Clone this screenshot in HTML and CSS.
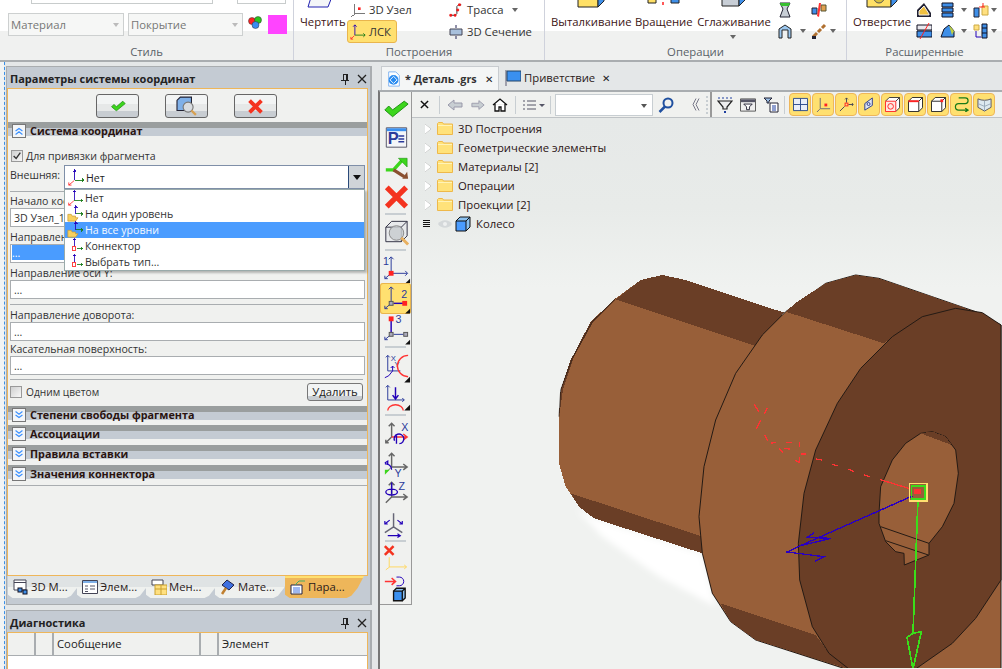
FILE: index.html
```html
<!DOCTYPE html>
<html lang="ru">
<head>
<meta charset="utf-8">
<title>Параметры системы координат</title>
<link rel="stylesheet" href="styles.css">
</head>
<body>
<svg class="defs" width="0" height="0">
  <symbol id="triad" viewBox="0 0 20 20"><g fill="none" stroke-width="1" shape-rendering="crispEdges"><path d="M8.500 1V13M6.500 3.500h4M7.500 2.500h2" stroke="#2200b8"/><path d="M8.500 13.500H19M17.500 11.500v4M18.500 12.500v2" stroke="#187a18"/></g><path d="M8 14L2 19M2 16v3h3" fill="none" stroke="#f33"/></symbol>
  <symbol id="triad-folder" viewBox="0 0 20 20"><g fill="none" stroke-width="1" shape-rendering="crispEdges"><path d="M10.500 0V10M8.500 2.500h4M9.500 1.500h2" stroke="#2200b8"/><path d="M10.500 10.500H19M17.500 8.500v4M18.500 9.500v2" stroke="#187a18"/></g><path d="M1 19V11h4l1 2h4v2h3l-3 4z" fill="#f8d060" stroke="#c89a30" stroke-width=".8"/></symbol>
  <symbol id="conn" viewBox="0 0 20 20"><g fill="none" stroke-width="1" shape-rendering="crispEdges"><path d="M8.500 1V11M6.500 3.500h4M7.500 2.500h2" stroke="#2200b8"/><path d="M12 13.500H19M17.500 11.500v4M18.500 12.500v2" stroke="#187a18"/><rect x="6.500" y="11.500" width="4" height="4" stroke="#f22"/></g></symbol>
  <symbol id="folder" viewBox="0 0 16 13"><path d="M.5 12.500V1.500l1-1h4l1 1.500h9v10.500z" fill="#ffe27a" stroke="#eeb84a"/><path d="M1 3.500h14" stroke="#fff3b8"/></symbol>
  <symbol id="cube-blue" viewBox="0 0 16 16"><path d="M1 5l4-4h10v10l-4 4M11 5l4-4" fill="#8ac0f0" stroke="#111"/><path d="M1 5h10v10H1z" fill="#4a9cff" stroke="#111"/></symbol>
  <symbol id="chev-up" viewBox="0 0 14 14"><path d="M3 7l4-3 4 3M3 11l4-3 4 3" fill="none" stroke="#3a90ff" stroke-width="1.400"/></symbol>
  <symbol id="chev-down" viewBox="0 0 14 14"><path d="M3 3l4 3 4-3M3 7l4 3 4-3" fill="none" stroke="#3a90ff" stroke-width="1.400"/></symbol>
  <symbol id="check" viewBox="0 0 20 14"><path d="M2 8l3-3 3 3 8-7 3 3-11 9z" fill="#3cd61c" stroke="#1f8f14"/></symbol>
  <symbol id="cross" viewBox="0 0 20 20"><path d="M3 3l14 14M17 3L3 17" stroke="#f4331f" stroke-width="4.500" fill="none"/></symbol>
</svg>

<header class="ribbon">
  <section class="rgroup rg-style">
    <div class="clipped-row"><span class="clip-a"></span><span class="clip-b"></span></div>
    <div class="style-row">
      <div class="rcombo">Материал<i class="mini-caret"></i></div>
      <div class="rcombo">Покрытие<i class="mini-caret"></i></div>
      <svg class="style-balls" viewBox="0 0 15 15"><circle cx="4" cy="6" r="3.500" fill="#f22" stroke="#333" stroke-width=".5"/><circle cx="10" cy="5" r="3.500" fill="#2cc41c" stroke="#333" stroke-width=".5"/><circle cx="7.500" cy="10" r="3.500" fill="#3a8cf0" stroke="#333" stroke-width=".5"/></svg>
      <span class="swatch"></span>
    </div>
    <div class="rlabel">Стиль</div>
  </section>

  <section class="rgroup rg-build">
    <div class="rbody">
      <div class="bigbtn draw">
        <svg class="draw-ic" viewBox="0 0 28 8"><path d="M5-6h21l-5 13H1z" fill="#f4f6f8" stroke="#2222b0"/></svg>
        <span>Чертить</span>
      </div>
      <div class="smallcol">
        <div class="sbtn"><svg class="ic14" viewBox="0 0 18 16"><path d="M5.500 1v11.500H17M5 13l-4 3" fill="none" stroke="#666" shape-rendering="crispEdges"/><rect x="9" y="5" width="3" height="3" fill="#f22"/></svg><span>3D Узел</span></div>
        <div class="sbtn active"><svg class="ic16" viewBox="0 0 18 18"><path d="M5.500 1v11.500M3.500 3l2-2 2 2" fill="none" stroke="#2200b8"/><path d="M5.500 12.500H17M15 10.500l2 2-2 2" fill="none" stroke="#187a18"/><path d="M5 13l-4 4M1 14.500V17h2.500" fill="none" stroke="#f33"/></svg><span>ЛСК</span></div>
      </div>
      <div class="smallcol second">
        <div class="sbtn"><svg class="ic14" viewBox="0 0 16 16"><path d="M1 14h6l2-2V4l2-2h3" fill="none" stroke="#222"/><path d="M1 13h2v2H1zM6 13h2v2H6zM11 1h2v2h-2zM9 7h2v2H9z" fill="#f22" stroke="#e11"/></svg><span>Трасса</span><i class="caret"></i></div>
        <div class="sbtn cut"><svg class="ic14" viewBox="0 0 14 14"><path d="M1 4h12v6H1z" fill="#a8c0dc" stroke="#445"/><path d="M7 0v3M7 11v3" stroke="#225"/></svg><span>3D Сечение</span></div>
      </div>
    </div>
    <div class="rlabel">Построения</div>
  </section>

  <section class="rgroup rg-ops">
    <div class="rbody">
      <div class="bigbtn op1">
        <svg class="clip-ic" viewBox="0 0 28 8"><path d="M1-8h20V7H1z" fill="#ffe066" stroke="#222"/><path d="M21 7l6-6v-9h-6z" fill="#3f8fe8" stroke="#222"/></svg>
        <span>Выталкивание</span>
      </div>
      <div class="bigbtn op2">
        <svg class="clip-ic" viewBox="0 0 34 8"><path d="M1-4h8V3H1z" fill="#ffe066" stroke="#222"/><path d="M16-8v15" stroke="#f22" stroke-dasharray="3 2" stroke-width="1.500"/><path d="M24-4h8V3h-8z" fill="#3f8fe8" stroke="#222"/></svg>
        <span>Вращение</span>
      </div>
      <div class="bigbtn op3">
        <svg class="clip-ic" viewBox="0 0 26 8"><path d="M1-8h17V6H1z" fill="#c8ced6" stroke="#222"/><path d="M18 6l6-6V-8h-6z" fill="#3f8fe8" stroke="#222"/></svg>
        <span>Сглаживание</span>
        <i class="caret big-caret"></i>
      </div>
      <div class="icongrid ops-grid">
        <svg class="ic16 a" viewBox="0 0 16 16"><path d="M3 1h10l-3 6 3 8H3l3-8z" fill="#c8ced6" stroke="#223"/><path d="M3 1h10l-1 3H4z" fill="#38c030"/></svg>
        <svg class="ic16 b" viewBox="0 0 16 16"><path d="M1 6h5v6H1z" fill="#3f8fe8" stroke="#223"/><path d="M10 3h5v6h-5z" fill="#e0a050" stroke="#553"/><path d="M6 14l2-13h2L8 15z" fill="#f33"/></svg>
        <svg class="ic16 c" viewBox="0 0 16 16"><path d="M2 15V6l6-4 6 4v9h-3V7H5v8z" fill="#9cc8f0" stroke="#222"/></svg>
        <i class="caret d"></i>
        <svg class="ic16 e" viewBox="0 0 16 16"><path d="M2 14l4-4M7 9l3-3M11 5l3-3" stroke="#b07030" stroke-width="3"/><path d="M1 13h4v3H1z" fill="#223"/></svg>
        <i class="caret f"></i>
      </div>
    </div>
    <div class="rlabel">Операции</div>
  </section>

  <section class="rgroup rg-adv">
    <div class="rbody">
      <div class="bigbtn adv1">
        <svg class="clip-ic" viewBox="0 0 32 8"><path d="M1-8h24V7H1z" fill="#ffe066" stroke="#222"/><path d="M25 7l6-6V-8h-6z" fill="#3f8fe8" stroke="#222"/><circle cx="13" cy="-2" r="5" fill="#d8c040" stroke="#555"/></svg>
        <span>Отверстие</span>
      </div>
      <div class="icongrid adv-grid">
        <svg class="ic16" viewBox="0 0 16 16"><path d="M1 15V8l7-7 7 10v4z" fill="#223"/><path d="M3 13V9l5-5 5 8v1z" fill="#f0c040" stroke="#eee"/></svg>
        <svg class="ic16" viewBox="0 0 16 16"><path d="M2 1h11v4H2zM2 6h11v4H2zM2 11h11v4H2z" fill="#3f8fe8" stroke="#112"/></svg>
        <i class="caret"></i>
        <svg class="ic16" viewBox="0 0 16 16"><path d="M1 6h5v9H1z" fill="#3f8fe8" stroke="#223"/><path d="M9 4h6v9H9z" fill="#ffe080" stroke="#ca4"/><path d="M6 5h6M10 1v4" stroke="#f22"/></svg>
        <i class="caret"></i>
        <svg class="ic16" viewBox="0 0 16 16"><path d="M1 2h15v5H1z" fill="#e8e8ee" stroke="#112"/><path d="M1 8h15v6H1z" fill="#3f8fe8" stroke="#112"/><path d="M4 16L13 0" stroke="#f22"/></svg>
        <svg class="ic16" viewBox="0 0 16 16"><path d="M1 14l3-8 5-4 5 6v6z" fill="#3f8fe8" stroke="#112"/><path d="M9 2l5 6-2 4z" fill="#c0d040"/></svg>
        <i class="caret"></i>
        <svg class="ic16" viewBox="0 0 16 16"><path d="M1 2h5v5H1z" fill="#ffe080" stroke="#ca4"/><path d="M9 1h5v14H9zM9 5h5M9 10h5" fill="#3f8fe8" stroke="#112"/><path d="M3 8v6h5" fill="none" stroke="#2200b8"/></svg>
        <i class="caret"></i>
      </div>
    </div>
    <div class="rlabel">Расширенные</div>
  </section>
</header>

<main class="main">
  <div class="rail"></div>

  <div class="leftcol">
    <section class="panel params">
      <div class="ptitle"><span>Параметры системы координат</span>
        <svg class="pin" viewBox="0 0 10 12"><path d="M3 1h4v6H3zM1 7.500h8M5 8v4M6 1.500v5" fill="none" stroke="#222" shape-rendering="crispEdges"/></svg>
        <svg class="close" viewBox="0 0 10 10"><path d="M1 1l8 8M9 1L1 9" stroke="#222" stroke-width="1.300"/></svg>
      </div>
      <div class="pbody">
        <div class="btnrow">
          <button class="tbtn"><svg class="b-ic" viewBox="0 0 20 14"><use href="#check"/></svg></button>
          <button class="tbtn"><svg class="b-ic2" viewBox="0 0 22 18"><path d="M2 4l3-3h10v10l-3 2H2z" fill="#7fb0e8" stroke="#223"/><circle cx="12" cy="10" r="4.500" fill="#d8dce0" stroke="#777"/><path d="M15 13l4 4" stroke="#d8a050" stroke-width="2"/></svg></button>
          <button class="tbtn"><svg class="b-ic3" viewBox="0 0 20 20"><use href="#cross"/></svg></button>
        </div>

        <div class="sec"><span class="tog"><svg viewBox="0 0 14 14"><use href="#chev-up"/></svg></span><b>Система координат</b></div>
        <label class="chkrow first"><span class="chk on"><svg viewBox="0 0 12 12"><path d="M2 6l3 3 5-7" fill="none" stroke="#333" stroke-width="1.600"/></svg></span>Для привязки фрагмента</label>
        <div class="extrow">
          <span class="extlabel">Внешняя:</span>
          <div class="combo"><svg class="ic18" viewBox="0 0 20 20"><use href="#triad"/></svg><span>Нет</span><span class="dropbtn"><i></i></span></div>
        </div>
        <hr class="hr r1">
        <div class="flabel">Начало координат:</div>
        <div class="inp">3D Узел_1</div>
        <div class="flabel">Направление оси X:</div>
        <div class="inp"><span class="sel">...</span></div>
        <div class="flabel">Направление оси Y:</div>
        <div class="inp dots">...</div>
        <hr class="hr r2">
        <div class="flabel">Направление доворота:</div>
        <div class="inp dots">...</div>
        <div class="flabel tight">Касательная поверхность:</div>
        <div class="inp dots">...</div>
        <hr class="hr r3">
        <div class="colorrow">
          <label class="chkrow mono"><span class="chk"></span>Одним цветом</label>
          <button class="delbtn">Удалить</button>
        </div>
        <div class="sec s2"><span class="tog"><svg viewBox="0 0 14 14"><use href="#chev-down"/></svg></span><b>Степени свободы фрагмента</b></div>
        <div class="sec"><span class="tog"><svg viewBox="0 0 14 14"><use href="#chev-down"/></svg></span><b>Ассоциации</b></div>
        <div class="sec"><span class="tog"><svg viewBox="0 0 14 14"><use href="#chev-down"/></svg></span><b>Правила вставки</b></div>
        <div class="sec"><span class="tog"><svg viewBox="0 0 14 14"><use href="#chev-down"/></svg></span><b>Значения коннектора</b></div>
        <hr class="hr r4">

        <ul class="dropdown">
          <li><svg viewBox="0 0 20 20"><use href="#triad"/></svg>Нет</li>
          <li><svg viewBox="0 0 20 20"><use href="#triad-folder"/></svg>На один уровень</li>
          <li class="hl"><svg viewBox="0 0 20 20"><use href="#triad-folder"/></svg>На все уровни</li>
          <li><svg viewBox="0 0 20 20"><use href="#conn"/></svg>Коннектор</li>
          <li><svg viewBox="0 0 20 20"><use href="#conn"/></svg>Выбрать тип...</li>
        </ul>
      </div>
      <div class="ptabs">
        <div class="ptab t1"><svg class="ic16" viewBox="0 0 16 16"><path d="M1 1h12v10H1zM1 3.500h12" fill="#fff" stroke="#445"/><rect x="5" y="9" width="4" height="4" fill="#3f8fe8" stroke="#112"/><rect x="10" y="11" width="4" height="4" fill="#3f8fe8" stroke="#112"/></svg><span>3D М...</span></div>
        <div class="ptab t2"><svg class="ic16" viewBox="0 0 16 16"><path d="M.5 1.500h15v13H.5z" fill="#fff" stroke="#445"/><path d="M1 2h14v2H1z" fill="#7fb0e8"/><path d="M3 7h3M8 7h5M3 10h3M8 10h5M3 12.500h3" stroke="#556"/></svg><span>Элем...</span></div>
        <div class="ptab t3"><svg class="ic16" viewBox="0 0 16 16"><path d="M1 1h11v5H1z" fill="#fff" stroke="#445"/><path d="M4 6h12v10H4z" fill="#ffe080" stroke="#c9a030"/><path d="M4 10h12M10 6v10" stroke="#c9a030"/></svg><span>Мен...</span></div>
        <div class="ptab t4"><svg class="ic16" viewBox="0 0 16 16"><path d="M2 6l5-5 7 5-5 5z" fill="#3f70e0" stroke="#224"/><path d="M6 9l-4 6" stroke="#c08030" stroke-width="2.500"/></svg><span>Мате...</span></div>
        <div class="ptab t5 on"><svg class="ic16" viewBox="0 0 16 16"><path d="M1 6h11v9H1z" fill="#fff" stroke="#224"/><path d="M3 9h7M3 11h7M3 13h7" stroke="#3f70e0"/><path d="M5 6l4-4h6" fill="none" stroke="#4a6"/></svg><span>Пара...</span></div>
      </div>
    </section>

    <section class="panel diag">
      <div class="ptitle"><span>Диагностика</span>
        <svg class="pin" viewBox="0 0 10 12"><path d="M3 1h4v6H3zM1 7.500h8M5 8v4M6 1.500v5" fill="none" stroke="#222" shape-rendering="crispEdges"/></svg>
        <svg class="close" viewBox="0 0 10 10"><path d="M1 1l8 8M9 1L1 9" stroke="#222" stroke-width="1.300"/></svg>
      </div>
      <div class="dbody">
        <div class="dhead"><span class="c1"></span><span class="c2"></span><span class="c3">Сообщение</span><span class="c2"></span><span class="c4">Элемент</span></div>
      </div>
    </section>
  </div>

  <div class="rightcol">
    <div class="doctabs">
      <div class="doctab on">
        <svg class="ic16" viewBox="0 0 16 18"><path d="M2 1h8l4 4v12H2z" fill="#fff" stroke="#7ab0f0"/><circle cx="7.500" cy="10" r="5.500" fill="#2a8cf0"/><path d="M7.500 6l4 4-4 4-4-4z" fill="none" stroke="#fff"/></svg>
        <b>* Деталь .grs</b><span class="x">✕</span>
      </div>
      <div class="doctab plain">
        <svg class="ic16" viewBox="0 0 16 16"><path d="M1 0v16" stroke="#889" stroke-width="1.500"/><path d="M2 1h14v10H2z" fill="#3a90f0" stroke="#246"/></svg>
        <span>Приветствие</span><span class="x">✕</span>
      </div>
    </div>
    <div class="work">
      <aside class="side">
        <svg class="v h30" viewBox="0 0 32 30"><path d="M5 18l4-4 4 4 12-9 4 3-16 13z" fill="#3cd61c" stroke="#1f8f14"/></svg>
        <svg class="v h30" viewBox="0 0 32 30"><path d="M6.500 5.500h21v20h-21z" fill="#f4f6f8" stroke="#556"/><path d="M7 6h20v3H7z" fill="#3a90f0"/><text x="8" y="22.500" class="pe">P</text><path d="M19 14h6M19 17h6M19 20h6" stroke="#2a3a9a" stroke-width="1.600"/></svg>
        <svg class="v h30" viewBox="0 0 32 30"><path d="M6 18h8l9-10" fill="none" stroke="#3cd61c" stroke-width="3.500"/><path d="M19 6h9v9z" fill="#3cd61c" stroke="#1f8f14" stroke-width=".6"/><path d="M14 18l11 7" stroke="#8a5030" stroke-width="3.500"/><path d="M23 27l6 0-1-7z" fill="#8a5030"/></svg>
        <svg class="v h30" viewBox="0 0 32 30"><path d="M7 5l20 20M27 5L7 25" stroke="#f4331f" stroke-width="5.500" fill="none"/></svg>
        <i class="vsep"></i>
        <svg class="v h32" viewBox="0 0 32 32"><path d="M6 11l6-6h16v15l-6 6H6z" fill="#e8eaec" stroke="#334"/><path d="M6 11h16v15M22 11l6-6" fill="none" stroke="#334"/><circle cx="17" cy="17" r="7.500" fill="#c8ccd0" fill-opacity=".85" stroke="#888"/><path d="M22 22l7 7" stroke="#e8b060" stroke-width="3"/></svg>
        <i class="vsep"></i>
        <div class="vbtn">
          <svg viewBox="0 0 32 31"><path d="M11.500 5v16M9 7l2.500-2.500L14 7M11.500 21.500H28M26 19l2.500 2.500L26 24M11 22l-6 5M5 24v3h3" fill="none" stroke="#2a3a9a"/><rect x="9" y="19" width="5" height="5" fill="#f22"/><text x="3" y="13" class="num">1</text><path d="M31 27v5h-5z" fill="#111"/></svg>
        </div>
        <div class="vbtn sel-y">
          <svg viewBox="0 0 32 31"><path d="M11.500 4v16M9 6l2.500-2.500L14 6M11 21l-6 5M5 23v3h3" fill="none" stroke="#2a3a9a"/><path d="M14 20.500h10" stroke="#2200b8" stroke-width="1.500"/><rect x="9.500" y="18.500" width="4" height="4" fill="#aab" stroke="#555"/><rect x="23" y="18" width="5" height="5" fill="#f22"/><text x="22" y="15" class="num">2</text><path d="M31 26v5h-5z" fill="#111"/></svg>
        </div>
        <div class="vbtn">
          <svg viewBox="0 0 32 31"><path d="M11.500 6v14" stroke="#2200b8" stroke-width="1.500"/><rect x="9" y="2" width="5" height="5" fill="#f22"/><path d="M14 20.500h10" stroke="#2a3a9a"/><path d="M11 21l-6 5M5 23v3h3" fill="none" stroke="#2a3a9a"/><rect x="9.500" y="18.500" width="4" height="4" fill="#aab" stroke="#555"/><rect x="24.500" y="18.500" width="4" height="4" fill="#aab" stroke="#555"/><text x="16" y="9" class="num">3</text><path d="M31 26v5h-5z" fill="#111"/></svg>
        </div>
        <i class="vsep s2"></i>
        <svg class="v h30" viewBox="0 0 32 30"><path d="M8 2v16h13M6 4l2-2 2 2" fill="none" stroke="#2a3a9a"/><text x="11" y="8" class="lit">X</text><text x="15" y="14" class="lit">Y</text><path d="M30 3a11 11 0 1 0 0 22" fill="none" stroke="#f33" stroke-width="1.400" transform="translate(-1 -1)"/><path d="M5 25l4-2 4-5v-5M11 15l2-2 2 2" fill="none" stroke="#2200b8"/><path d="M31 24v6h-6z" fill="#111"/></svg>
        <svg class="v h30" viewBox="0 0 32 30"><path d="M8 2v15h17M6 4l2-2 2 2M23 15l2 2-2 2" fill="none" stroke="#2a3a9a"/><path d="M16 4v12M13 12l3 4 3-4" fill="none" stroke="#2200b8" stroke-width="1.500"/><path d="M8 28a8 6 0 0 1 16 0" fill="none" stroke="#f33" stroke-width="1.400"/><path d="M31 22v6h-6z" fill="#111"/></svg>
        <i class="vsep s3"></i>
        <svg class="v h30" viewBox="0 0 32 30"><path d="M12 5v13M9 7l3-3 3 3M12 18l-6 6M6 21v3h3" fill="none" stroke="#666" stroke-width="1.500"/><path d="M12 18h15M24 15l4 3-4 3" fill="none" stroke="#f33" stroke-width="1.500"/><path d="M15 22a5 5 0 1 1 5 3M17 16v9" fill="none" stroke="#2200b8" stroke-width="1.400"/><text x="22" y="12" class="lit big">X</text></svg>
        <svg class="v h30" viewBox="0 0 32 30"><path d="M12 5v13M9 7l3-3 3 3M12 18H27M24 15l4 3-4 3" fill="none" stroke="#666" stroke-width="1.500"/><path d="M12 18l-5 5" stroke="#666"/><path d="M5 21h5l-5 5z" fill="#3cd61c"/><path d="M5 15a6 6 0 0 1 7 6M5 14l3-2v4" fill="none" stroke="#2200b8" stroke-width="1.300"/><text x="15" y="28" class="lit big">Y</text></svg>
        <svg class="v h30" viewBox="0 0 32 30"><path d="M12 4v14M9 6l3-3 3 3M12 18H27M24 15l4 3-4 3M12 18l-6 6" fill="none" stroke="#666" stroke-width="1.500"/><path d="M6 13a6 3 0 1 0 12 0a6 3 0 1 0-12 0M12 3v12" fill="none" stroke="#2200b8" stroke-width="1.400"/><text x="19" y="11" class="lit big">Z</text></svg>
        <svg class="v h30" viewBox="0 0 32 30"><path d="M14 4v14M14 18l-9 6M14 18l9 6" fill="none" stroke="#667" stroke-width="1.500"/><path d="M5 15l5-4M5 12v3h3M18 11l5 4M23 12v3h-3M8 27h12M18 25l3 2-3 2" fill="none" stroke="#2200b8" stroke-width="1.200"/></svg>
        <i class="vsep s4"></i>
        <svg class="v h12" viewBox="0 0 32 12"><path d="M5 1l9 9M14 1l-9 9" stroke="#f4331f" stroke-width="2.600"/></svg>
        <svg class="v h14" viewBox="0 0 32 14"><path d="M9.500 0v10H27M6 13l4-3M25 8l2.500 2-2.500 2" fill="none" stroke="#ffd860"/></svg>
        <svg class="v h16" viewBox="0 -5 32 16"><path d="M5 5.500h11M12 2l4 3.500L12 9" fill="none" stroke="#f33" stroke-width="1.600"/><path d="M17 1h3a2 2 0 0 1 0 9h-3" fill="none" stroke="#2200b8"/></svg>
        <svg class="v h15" viewBox="0 0 32 15"><path d="M14 4l3-3h9v10l-3 3M23 4l3-3" fill="#8ac0f0" stroke="#111" stroke-width="1.400"/><path d="M14 4h9v10h-9z" fill="#3a90f0" stroke="#111" stroke-width="1.400"/></svg>
      </aside>

      <div class="content">
        <div class="toolbar">
          <div class="tb-left">
            <svg class="t-x" viewBox="0 0 10 10"><path d="M1 1l8 8M9 1L1 9" stroke="#111" stroke-width="1.600"/></svg>
            <i class="tsep"></i>
            <svg class="t-ar a1" viewBox="0 0 16 12"><path d="M1 6l6-5v3h8v4H7v3z" fill="#c8ced2" stroke="#99a"/></svg>
            <svg class="t-ar a2" viewBox="0 0 16 12"><path d="M15 6L9 1v3H1v4h8v3z" fill="#c8ced2" stroke="#99a"/></svg>
            <svg class="t-home" viewBox="0 0 16 14"><path d="M1 7l7-6 7 6M3 6v7h4V9h2v4h4V6" fill="#fff" stroke="#111" stroke-width="1.300"/></svg>
            <i class="tsep s-a"></i>
            <svg class="t-list" viewBox="0 0 22 10"><path d="M0 1h2M0 5h2M0 9h2M4 1h9M4 5h9M4 9h9" stroke="#556"/><path d="M16 4h6l-3 3z" fill="#556"/></svg>
            <i class="tsep s-b"></i>
            <div class="tcombo"><i class="mini-caret dark"></i></div>
            <svg class="t-search" viewBox="0 0 16 16"><circle cx="10" cy="6" r="4.500" fill="none" stroke="#1f4f9f" stroke-width="2"/><path d="M7 9.500l-5.500 5.500" stroke="#1f4f9f" stroke-width="2.500"/></svg>
            <svg class="t-coll" viewBox="0 0 8 14"><path d="M4 1L1 7l3 6M7 1L4 7l3 6" fill="none" stroke="#778"/></svg>
            <i class="grip"></i>
          </div>
          <div class="tb-right">
            <svg class="t-f" viewBox="0 0 16 16"><path d="M1 1h2M5 1h2M9 1h2M13 1h2" stroke="#1f3f9f"/><path d="M1 4h14l-5 6v2H6v-2z" fill="#eee" stroke="#222" stroke-width="1.200"/><path d="M7 14h2v2H7z" fill="#1f3f9f"/></svg>
            <svg class="t-f" viewBox="0 0 17 14"><path d="M.5.500h16v13H.5z" fill="#eee" stroke="#555"/><path d="M1 1h15v3H1z" fill="#556"/><path d="M4 6h9l-3 3v3H7V9z" fill="#fff" stroke="#223"/></svg>
            <svg class="t-f" viewBox="0 0 16 16"><path d="M1 1h8L6 4v2H4V4z" fill="#9cc0e8" stroke="#223"/><path d="M7 6h8v9H7z" fill="#fff" stroke="#223"/><path d="M9 9h4M9 11h4M9 13h4" stroke="#1f3f9f"/></svg>
            <i class="tsep s-c"></i>
            <div class="ybtns">
              <span class="y"><svg viewBox="0 0 16 14"><path d="M.5.500h15v13H.5zM.5 7h15M8 .5v13" fill="#e8eef8" stroke="#2a4a8a"/></svg></span>
              <span class="y"><svg viewBox="0 0 16 16"><path d="M4.500 1v11.500H15M4 13l-3 3" fill="none" stroke="#667"/><rect x="9" y="7" width="3" height="3" fill="#f22"/></svg></span>
              <span class="y"><svg viewBox="0 0 16 16"><path d="M8 1v5M6.500 2.500L8 1l1.500 1.500M10 8h5M14 6.500L15 8l-1 1.500M6 10l-5 5" fill="none" stroke="#445"/><rect x="6.500" y="6.500" width="3" height="3" fill="none" stroke="#f22"/></svg></span>
              <span class="y"><svg viewBox="0 0 16 16"><path d="M3 14V7l8-6v8z" fill="#dde4f4" stroke="#2a3a8a"/><circle cx="7" cy="7.500" r="1.600" fill="none" stroke="#2a3a8a"/></svg></span>
              <span class="y"><svg viewBox="0 0 16 16"><path d="M.5 4.500l4-4h11v11l-4 4M11.500 4.500l4-4" fill="#fff" stroke="#333"/><path d="M.5 4.500h11v11H.5z" fill="#ffe8e0" stroke="#f22"/><circle cx="6" cy="10" r="3" fill="none" stroke="#f22"/></svg></span>
              <span class="y"><svg viewBox="0 0 16 16"><path d="M.5 4.500l4-4h11v11l-4 4M11.500 4.500l4-4" fill="#fff" stroke="#222"/><path d="M.5 4.500h11v11H.5z" fill="#fff" stroke="#222"/><path d="M.5 4.500h11" stroke="#f22" stroke-width="2"/></svg></span>
              <span class="y"><svg viewBox="0 0 16 16"><path d="M.5 4.500l4-4h11v11l-4 4M11.500 4.500l4-4" fill="#fff" stroke="#222"/><path d="M.5 4.500h11v11H.5z" fill="#fff" stroke="#222"/><rect x="10" y="2.500" width="3" height="3" fill="#f22"/></svg></span>
              <span class="y"><svg viewBox="0 0 16 16"><path d="M5 1h7a3 3 0 0 1 0 6H5a3 3 0 0 0 0 7h9M12 12l3 2-3 2" fill="none" stroke="#187a18" stroke-width="1.300"/></svg></span>
              <span class="y"><svg viewBox="0 0 16 16"><path d="M1 2c4 2 10 2 14 0v9l-7 4-7-4z" fill="#dde8f0" stroke="#556"/><path d="M8 4v11M1 7l7 3 7-3" fill="none" stroke="#9ab"/></svg></span>
            </div>
          </div>
        </div>

        <div class="view">
          <svg class="model" viewBox="0 0 590 550" shape-rendering="crispEdges">
            <defs><filter id="soft"><feGaussianBlur stdDeviation="9"/></filter></defs>
            <g transform="translate(147 142) scale(.33333)">
              <path d="M50 745L105 775 430 880 470 1040 300 950 130 830z" fill="#fff" filter="url(#soft)"/>
              <g stroke="#241a14" stroke-width="3" stroke-linejoin="round">
                <path d="M0 470L5 390 35 300 95 185 170 115 245 60 310 45 380 60 675 158 610 225 420 770 430 880 105 775 60 740 20 680 0 610z" fill="#985f39" stroke="none"/>
                <path d="M170 118L245 60 310 45 380 60 675 158 590 258z" fill="#6a3e26" stroke="none"/>
                <path d="M35 700L60 740 105 775 430 880 425 828z" fill="#6a3e26" stroke="none"/>
                <path d="M0 470L5 390 35 300 95 185 170 118 100 190 45 290 12 390z" fill="#6a3e26" stroke="none"/>
                <path d="M170 115L100 185 40 295 5 390 0 470" fill="none" stroke-width="2"/>
                <path d="M420 770L435 620 470 480 530 340 610 225 680 155 800 70 890 45 960 55 1250 155 1326 195V1227H860L590 1140 515 1085 460 1000 430 880z" fill="#985f39"/>
                <path d="M680 155L715 125 800 70 890 45 960 55 1250 155 1190 145 1090 170 1000 230 975 250z" fill="#6a3e26" stroke="none"/>
                <path d="M485 1030L515 1085 590 1140 870 1227 810 1180 770 1125z" fill="#6a3e26" stroke="none"/>
                <path d="M722 960L718 850 735 700 770 570 835 430 905 325 1000 230 1090 170 1190 145 1270 158 1326 195V960L1250 1075 1180 1150 1070 1227H870L810 1180 760 1100z" fill="#6a3e26"/>
                <path d="M960 760L965 680 1000 600 1040 550 1085 520 1120 515 1160 530 1190 570 1198 640 1185 730 1150 800 1110 850V885L1036 915 1035 880 1010 875 980 845 960 790z" fill="#985f39"/>
                <path d="M1085 520L1120 515 1160 530 1178 555z" fill="#6a3e26" stroke="none"/>
                <path d="M965 800L1110 850M980 842L1108 885" fill="none"/>
              </g>
              <g fill="none" stroke-width="4">
                <path d="M585 432L600 455M625 445L615 462M605 480L592 507M618 525L626 542M635 550L650 547M660 565L672 577M682 548L698 548M676 565L692 567M722 546L722 560M708 600L722 608 722 590M726 582L740 582M772 597L788 600M820 612L835 618M868 628L884 634M916 645L932 650" stroke="#f33"/>
                <path d="M964 659L1052 686" stroke="#f33"/>
                <path d="M1060 708L722 858 815 835 745 832 765 818M722 858L684 876 795 890 768 904" stroke="#2a00c0"/>
                <path d="M1077 715L1062 1120 1044 1132 1062 1227 1087 1115 1062 1120" stroke="#3ade1a" stroke-width="5"/>
                <rect x="1052" y="671" width="53" height="52" stroke="#ffe070" stroke-width="5"/>
                <rect x="1058" y="678" width="40" height="39" stroke="#3ade1a" stroke-width="5"/>
                <rect x="1064" y="688" width="22" height="14" fill="#f33" stroke="none"/>
              </g>
            </g>
          </svg>
          <ul class="tree">
            <li><i class="tri"></i><svg class="fld" viewBox="0 0 16 13"><use href="#folder"/></svg>3D Построения</li>
            <li><i class="tri"></i><svg class="fld" viewBox="0 0 16 13"><use href="#folder"/></svg>Геометрические элементы</li>
            <li><i class="tri"></i><svg class="fld" viewBox="0 0 16 13"><use href="#folder"/></svg>Материалы [2]</li>
            <li><i class="tri"></i><svg class="fld" viewBox="0 0 16 13"><use href="#folder"/></svg>Операции</li>
            <li><i class="tri"></i><svg class="fld" viewBox="0 0 16 13"><use href="#folder"/></svg>Проекции [2]</li>
            <li class="leaf"><i class="lines"></i><svg class="eye" viewBox="0 0 14 8"><path d="M0 4c3-5 11-5 14 0c-3 5-11 5-14 0z" fill="#d4d8da"/><circle cx="7" cy="4" r="2" fill="#eef0f0"/></svg><svg class="cb" viewBox="0 0 16 16"><use href="#cube-blue"/></svg>Колесо</li>
          </ul>
        </div>
      </div>
    </div>
  </div>
</main>
</body>
</html>
```

FILE: styles.css
```css
* { box-sizing: border-box; }
html, body { margin: 0; padding: 0; }
body {
  width: 1002px; height: 669px; overflow: hidden;
  font: 11.300px/14px "Open Sans", "Noto Sans", sans-serif;
  color: #222; background: #e4e7e8;
  display: flex; flex-direction: column;
}
.defs { position: absolute; }
i { display: block; font-style: normal; }
svg { display: block; flex: none; }
.ic14 { width: 16px; height: 14px; }
.ic16 { width: 16px; height: 16px; }
.ic18 { width: 18px; height: 18px; }

/* ribbon */
.ribbon {
  height: 62px; flex: none; display: flex;
  background: linear-gradient(#fff 0 31px, #f0f1f0 31px);
  border-bottom: 2px solid #a9adb0;
}
.rgroup { display: flex; flex-direction: column; position: relative; border-right: 1px solid #cfd2dc; }
.rg-style { width: 294px; }
.rg-build { width: 251px; }
.rg-ops { width: 302px; }
.rg-adv { flex: 1; border-right: 0; }
.rbody { display: flex; height: 44px; }
.rlabel { height: 16px; text-align: center; color: #5a6268; line-height: 15px; }
.clipped-row { display: flex; height: 4px; padding-left: 31px; gap: 24px; }
.clip-a, .clip-b { height: 4px; border: 1px solid #c8cccc; border-top: 0; background: #fff; }
.clip-a { width: 182px; } .clip-b { width: 49px; }
.style-row { display: flex; align-items: flex-start; padding: 9px 0 0 8px; height: 40px; gap: 4px; }
.rcombo { width: 116px; height: 23px; border: 1px solid #cdd0d0; padding: 3px 2px; color: #777; position: relative; line-height: 16px; background: #f6f7f6; }
.rcombo + .rcombo { width: 115px; }
.mini-caret { position: absolute; right: 4px; top: 9px; border: 3px solid transparent; border-top: 4px solid #bbb; border-bottom: 0; width: 0; }
.mini-caret.dark { border-top-color: #555; right: 5px; top: 9px; }
.style-balls { width: 15px; height: 15px; margin: 2px 0 0 1px; }
.swatch { width: 19px; height: 19px; background: #ff44ff; margin: 2px 0 0 1px; }
.bigbtn { position: relative; text-align: center; white-space: nowrap; color: #3c1515; }
.bigbtn span { display: block; margin-top: 7px; }
.draw { width: 44px; margin-left: 6px; }
.draw-ic { width: 28px; height: 8px; margin-left: 7px; }
.smallcol { margin-left: 3px; width: 92px; }
.smallcol.second { width: 105px; margin-left: 0; }
.sbtn { display: flex; align-items: center; gap: 3px; height: 20px; white-space: nowrap; padding-left: 3px; color: #333; }
.sbtn.active { width: 50px; height: 23px; background: #ffe070; border: 1px solid #e9b54d; border-radius: 3px; padding-left: 2px; }
.sbtn.cut { height: 23px; }
.smallcol.second .sbtn { padding-left: 9px; }
.caret { border: 3px solid transparent; border-top: 4px solid #666; border-bottom: 0; width: 0; margin-left: 5px; }
.big-caret { position: absolute; left: 33px; top: 35px; margin: 0; }
.clip-ic { height: 8px; margin: 0 auto; }
.op1 { margin-left: 6px; width: 79px; } .op1 .clip-ic { width: 28px; }
.op2 { margin-left: 5px; width: 57px; } .op2 .clip-ic { width: 34px; }
.op3 { margin-left: 5px; width: 74px; } .op3 .clip-ic { width: 26px; }
.icongrid { display: grid; align-items: center; justify-items: start; }
.ops-grid { grid-template-columns: 34px 16px 10px; grid-template-rows: 19px 23px; margin-left: 6px; position: relative; }
.ops-grid .a { grid-column: 1; grid-row: 1; }
.ops-grid .b { grid-column: 2; grid-row: 1; }
.ops-grid .c { grid-column: 1; grid-row: 2; }
.ops-grid .d { grid-column: 1; grid-row: 2; margin-left: 23px; }
.ops-grid .e { grid-column: 2; grid-row: 2; }
.ops-grid .f { grid-column: 3; grid-row: 2; margin-left: 3px; }
.adv1 { margin-left: 6px; width: 58px; } .adv1 .clip-ic { width: 32px; }
.adv-grid { grid-template-columns: 24px 18px 15px 16px 10px; grid-template-rows: 19px 23px; margin-left: 5px; }
.adv-grid > svg:nth-of-type(1) { grid-column: 1; grid-row: 1; }
.adv-grid > svg:nth-of-type(2) { grid-column: 2; grid-row: 1; }
.adv-grid > i:nth-of-type(1) { grid-column: 3; grid-row: 1; margin-left: 3px; }
.adv-grid > svg:nth-of-type(3) { grid-column: 4; grid-row: 1; }
.adv-grid > i:nth-of-type(2) { grid-column: 5; grid-row: 1; margin-left: 2px; }
.adv-grid > svg:nth-of-type(4) { grid-column: 1; grid-row: 2; }
.adv-grid > svg:nth-of-type(5) { grid-column: 2; grid-row: 2; }
.adv-grid > i:nth-of-type(3) { grid-column: 3; grid-row: 2; margin-left: 3px; }
.adv-grid > svg:nth-of-type(6) { grid-column: 4; grid-row: 2; }
.adv-grid > i:nth-of-type(4) { grid-column: 5; grid-row: 2; margin-left: 2px; }

/* main */
.main { flex: 1; display: flex; min-height: 0; }
.rail { width: 6px; flex: none; background: linear-gradient(90deg, #f2f4f4 0 4px, transparent 4px); }
.rail::after { content: ""; display: block; margin-left: 4px; height: 100%; border-left: 1px dashed #3a90e8; }
.leftcol { width: 366px; flex: none; display: flex; flex-direction: column; padding-top: 4px; gap: 5px; }
.panel { background: #c4cbd3; border: 1px solid #a9adb0; border-width: 1px 2px 0 1px; display: flex; flex-direction: column; position: relative; }
.params { height: 539px; padding-bottom: 6px; border-bottom: 1px solid #a9adb0; }
.diag { flex: 1; min-height: 0; }
.ptitle { height: 21px; flex: none; display: flex; align-items: center; font-weight: 700; font-size: 11px; padding: 2px 0 0 3px; color: #222; }
.ptitle > span { flex: 1; }
.pin { width: 10px; height: 12px; margin-right: 7px; }
.close { width: 10px; height: 10px; margin-right: 3px; }
.pbody { position: relative; flex: 1; min-height: 0; background: #f0f1ef; border: 1px solid #eeb65a; margin: 0 2px 0 0; display: flex; flex-direction: column; font-size: 10.600px; }
.btnrow { height: 33px; flex: none; display: flex; gap: 26px; padding: 5px 0 0 88px; }
.tbtn { width: 43px; height: 24px; padding: 0; display: flex; align-items: center; justify-content: center; border: 1px solid #666; border-radius: 3px; background: linear-gradient(#f2f4f4 0 40%, #e6e8e8 40% 72%, #c8cdd2 72%); }
.b-ic { width: 16px; height: 12px; }
.b-ic2 { width: 26px; height: 20px; }
.b-ic3 { width: 17px; height: 17px; }
.sec { height: 20px; flex: none; display: flex; background: linear-gradient(#9a9e9e 0 6px, #c4cbd3 6px 14px, transparent 14px); padding: 2px 0 0 4px; gap: 4px; }
.sec.s2 { margin-top: 5px; height: 19px; }
.sec b { font-size: 10.800px; line-height: 14px; color: #2a1410; }
.tog { width: 14px; height: 14px; border: 1px solid #777; background: #f4f6f8; }
.tog svg { width: 12px; height: 12px; }
.chkrow { display: flex; align-items: center; gap: 3px; height: 12px; color: #333; }
.chkrow.first { margin: 8px 0 0 3px; flex: none; }
.chkrow.mono { font-size: 10.200px; gap: 4px; }
.chk { width: 12px; height: 12px; border: 1px solid #999; background: linear-gradient(135deg, #cfd0d0, #f8f8f8); }
.chk svg { width: 10px; height: 10px; }
.extrow { display: flex; height: 24px; flex: none; margin-top: 3px; padding-left: 2px; align-items: center; }
.extlabel { width: 54px; color: #333; margin-top: -4px; }
.combo { width: 301px; height: 24px; border: 1px solid #7f8fa8; background: #fff; display: flex; align-items: center; gap: 1px; padding-left: 2px; }
.combo > span:first-of-type { flex: 1; padding-top: 1px; }
.dropbtn { width: 16px; height: 22px; background: #cfd4d8; border-left: 1px solid #2a4a7a; display: flex; align-items: center; justify-content: center; }
.dropbtn i { border: 4px solid transparent; border-top: 5px solid #111; border-bottom: 0; width: 0; }
.hr { flex: none; height: 1px; margin: 0 4px 0 2px; border: 0; background: #a9adb0; }
.hr.r1 { margin-top: 2px; }
.hr.r2 { margin-top: 5px; }
.hr.r3 { margin-top: 4px; }
.hr.r4 { margin: 0; }
.flabel { height: 14px; flex: none; margin: 3px 0 0 2px; color: #333; line-height: 14px; }
.hr.r1 + .flabel { margin-top: 2px; }
.hr.r2 + .flabel { margin-top: 3px; }
.flabel.tight { margin-top: 1px; }
.inp { height: 19px; flex: none; margin: 0 2px; background: #fff; border: 1px solid #a9adb0; padding: 1px 3px; line-height: 16px; color: #333; white-space: nowrap; overflow: hidden; }
.inp .sel { display: block; background: #4a9cff; color: #fff; margin: -1px 0 0 -2px; width: 100%; height: 15px; }
.colorrow { display: flex; justify-content: space-between; align-items: center; height: 18px; flex: none; margin: 3px 4px 0 2px; }
.delbtn { width: 56px; height: 18px; padding: 0; font: 11.300px/14px "Open Sans", "Noto Sans", sans-serif; color: #222; border: 1px solid #777; border-radius: 3px; background: linear-gradient(#f2f4f4 0 72%, #c8cdd2 72%); }
.dropdown { position: absolute; left: 56px; top: 100px; width: 301px; height: 82px; margin: 0; padding: 0; list-style: none; background: #fff; border: 1px solid #9aa; box-shadow: 2px 2px 2px rgba(0,0,0,.25); color: #333; }
.dropdown li { height: 16px; display: flex; align-items: center; gap: 1px; padding-left: 2px; }
.dropdown li svg { width: 17px; height: 17px; margin-top: -1px; }
.dropdown li.hl { background: #4a9cff; color: #f4f8ff; }

.ptabs { display: flex; height: 22px; flex: none; padding-left: 1px; background: #c4cbd3; }
.ptab { width: 69px; height: 22px; display: flex; align-items: center; gap: 2px; padding-left: 5px; white-space: nowrap; color: #2a1a1a; position: relative; z-index: 0; }
.ptab::before { content: ""; position: absolute; z-index: -1; left: 0; top: 0; right: -6px; bottom: 0; background: linear-gradient(#dfe3e4 0 50%, #eff1ef 50%); clip-path: polygon(0 0, 100% 0, 92% 55%, 84% 90%, 78% 100%, 6% 100%, 0 85%); }
.ptab.on::before { background: linear-gradient(#ffe070 0 2px, #eeb65a 2px); }
.ptab.t5 { width: 73px; }
.ptab.on { margin-left: 1px; }

.dbody { flex: 1; background: #fff; border: 1px solid #eeb65a; border-bottom: 0; margin: 0 2px 0 0; }
.dhead { display: flex; height: 23px; background: #f0f1ef; border-bottom: 1px solid #a9adb0; }
.dhead span { border-right: 2px solid #a9adb0; padding: 4px 0 0 3px; color: #222; }
.dhead .c1 { width: 28px; } .dhead .c2 { width: 18px; } .dhead .c3 { width: 147px; } .dhead .c4 { flex: 1; border-right: 0; }

/* right */
.rightcol { flex: 1; min-width: 0; display: flex; flex-direction: column; padding-top: 4px; }
.doctabs { height: 24px; flex: none; display: flex; margin-left: 9px; gap: 6px; }
.doctab { display: flex; align-items: center; gap: 3px; height: 24px; white-space: nowrap; color: #2a1a1a; }
.doctab.on { background: #f4f6f6; border: 1px solid #c8ccd0; border-bottom: 0; width: 118px; padding: 0 5px 0 4px; }
.doctab.on b { color: #333; flex: 1; font-size: 10.800px; }
.doctab .x { margin-left: 4px; font-size: 10px; color: #222; }
.doctab.on .x { margin-left: 0; }
.work { flex: 1; min-height: 0; display: flex; position: relative; margin-left: 6px; background: #f0f2f0; border-top: 2px solid #a9adb0; border-left: 2px solid #777; }
.side { width: 32px; height: 513px; flex: none; display: flex; flex-direction: column; background: #f0f1ef; border-right: 1px solid #999; border-bottom: 1px solid #999; }
.side .v { width: 31px; }
.h30 { height: 30px; } .h32 { height: 32px; } .h12 { height: 12px; } .h14 { height: 14px; } .h16 { height: 16px; } .h15 { height: 15px; }
.vsep { height: 2px; margin: 1px 5px; background: #c8ced2; flex: none; }
.vsep.s2 { margin: 1px 5px 5px; }
.vsep.s3 { margin: 1px 5px 3px; }
.vsep.s4 { margin: 1px 5px 3px; }
.vbtn { width: 31px; height: 31px; flex: none; }
.vbtn svg { width: 31px; height: 31px; }
.sel-y { background: #ffe070; border-radius: 3px; box-shadow: inset 0 0 0 1px #e9b54d; }
.pe { font: 700 17px "Liberation Sans", sans-serif; fill: #2a3a9a; }
.num { font: 11px "Liberation Sans", sans-serif; fill: #2a3a9a; }
.lit { font: 8px "Liberation Sans", sans-serif; fill: #2a3a9a; }
.lit.big { font-size: 11px; }

.content { flex: 1; min-width: 0; display: flex; flex-direction: column; }
.toolbar { height: 26px; flex: none; display: flex; background: #f0f1ef; border-bottom: 1px solid #bfc3c6; }
.tb-left { width: 300px; display: flex; align-items: center; position: relative; border-right: 2px solid #999; }
.tb-right { flex: 1; display: flex; align-items: center; }
.t-x { width: 9px; height: 9px; margin-left: 8px; }
.tsep { width: 1px; height: 18px; background: #c8ced2; margin-left: 10px; }
.t-ar { width: 16px; height: 12px; }
.a1 { margin-left: 7px; } .a2 { margin-left: 8px; width: 14px; }
.t-home { width: 16px; height: 14px; margin-left: 7px; }
.tsep.s-a { margin-left: 7px; }
.t-list { width: 22px; height: 10px; margin-left: 7px; }
.tsep.s-b { margin-left: 5px; }
.tcombo { width: 98px; height: 22px; margin-left: 4px; border: 1px solid #c8ced2; background: #fff; position: relative; }
.t-search { width: 16px; height: 16px; margin-left: 5px; }
.t-coll { width: 8px; height: 15px; margin-left: 18px; }
.grip { width: 2px; height: 18px; margin-left: 6px; background: repeating-linear-gradient(#c8ced2 0 2px, transparent 2px 4px); }
.t-f { width: 16px; height: 16px; margin-left: 7px; }
.t-f:first-child { margin-left: 5px; }
.tsep.s-c { margin-left: 5px; }
.ybtns { display: flex; gap: 1px; margin-left: 4px; }
.y { width: 22px; height: 23px; background: #ffe070; border: 1px solid #eeb65a; border-radius: 4px; display: flex; align-items: center; justify-content: center; }
.y svg { width: 15px; height: 15px; }

.view { flex: 1; position: relative; min-height: 0; background: linear-gradient(#e6e9e8 0, #e8ebe9 90px, #f0f2f0 170px); }
.model { position: absolute; left: 0; top: 0; width: 590px; height: 550px; }
.tree { position: relative; list-style: none; margin: 0; padding: 1px 0 0 13px; }
.tree li { height: 19px; display: flex; align-items: center; color: #2a1414; white-space: nowrap; }
.tri { width: 0; border: 5px solid transparent; border-left: 6px solid #fff; border-right: 0; filter: drop-shadow(0 0 .6px #555); }
.fld { width: 16px; height: 13px; margin: 0 5px 0 6px; }
.lines { width: 7px; height: 7px; margin-left: -2px; background: repeating-linear-gradient(#111 0 1px, transparent 1px 2px); }
.eye { width: 14px; height: 8px; margin-left: 8px; }
.cb { width: 16px; height: 16px; margin: 0 5px 0 3px; }
```
